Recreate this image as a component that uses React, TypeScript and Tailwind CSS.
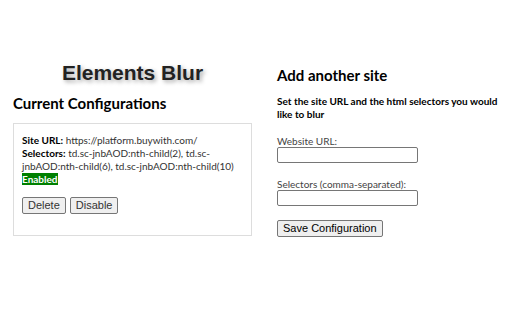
export default function App() {
  const ui = { fontFamily: 'Lato, "Open Sans", sans-serif' };
  const btn = { fontFamily: '"Liberation Sans", Arial, sans-serif' };

  return (
    <div className="w-[512px] h-[320px] bg-white text-black overflow-hidden" style={ui}>
      <div className="flex pt-[60px]">
        <div className="w-[239px] ml-[13px]">
          <h1
            className="text-center text-[21px] font-bold text-[#222] leading-[25px] [text-shadow:2px_2px_4px_rgba(0,0,0,0.35)]"
            style={btn}
          >
            Elements Blur
          </h1>
          <h2 className="mt-[8px] text-[15px] font-bold leading-[20px]">Current Configurations</h2>
          <div className="mt-[10px] border border-[#ddd] h-[113px] px-[8px] pt-[10px] text-[10px] leading-[13px] text-[#333]">
            <div>
              <b className="text-black">Site URL:</b> https://platform.buywith.com/
            </div>
            <div>
              <b className="text-black">Selectors:</b> td.sc-jnbAOD:nth-child(2), td.sc-jnbAOD:nth-child(6), td.sc-jnbAOD:nth-child(10)
            </div>
            <div>
              <span className="bg-[#008000] text-white font-bold">Enabled</span>
            </div>
            <div className="flex gap-[4px] mt-[11px]" style={btn}>
              <button className="px-[5px] h-[17px] text-[11px] leading-none border border-[#767676] bg-[#efefef] rounded-[2px]">
                Delete
              </button>
              <button className="px-[5px] h-[17px] text-[11px] leading-none border border-[#767676] bg-[#efefef] rounded-[2px]">
                Disable
              </button>
            </div>
          </div>
        </div>
        <div className="ml-[25px] w-[228px]">
          <h2 className="mt-[5px] text-[15px] font-bold leading-[20px]">Add another site</h2>
          <p className="mt-[10px] text-[10px] font-bold leading-[13px]">
            Set the site URL and the html selectors you would like to blur
          </p>
          <div className="mt-[14px] text-[10px] leading-[12px] text-[#444]">Website URL:</div>
          <input className="block w-[141px] h-[16px] border border-[#767676] rounded-[2px]" />
          <div className="mt-[15px] text-[10px] leading-[12px] text-[#444]">Selectors (comma-separated):</div>
          <input className="block w-[141px] h-[16px] border border-[#767676] rounded-[2px]" />
          <button
            className="mt-[14px] px-[5px] h-[17px] text-[11px] leading-none border border-[#767676] bg-[#efefef] rounded-[2px]"
            style={btn}
          >
            Save Configuration
          </button>
        </div>
      </div>
    </div>
  );
}
